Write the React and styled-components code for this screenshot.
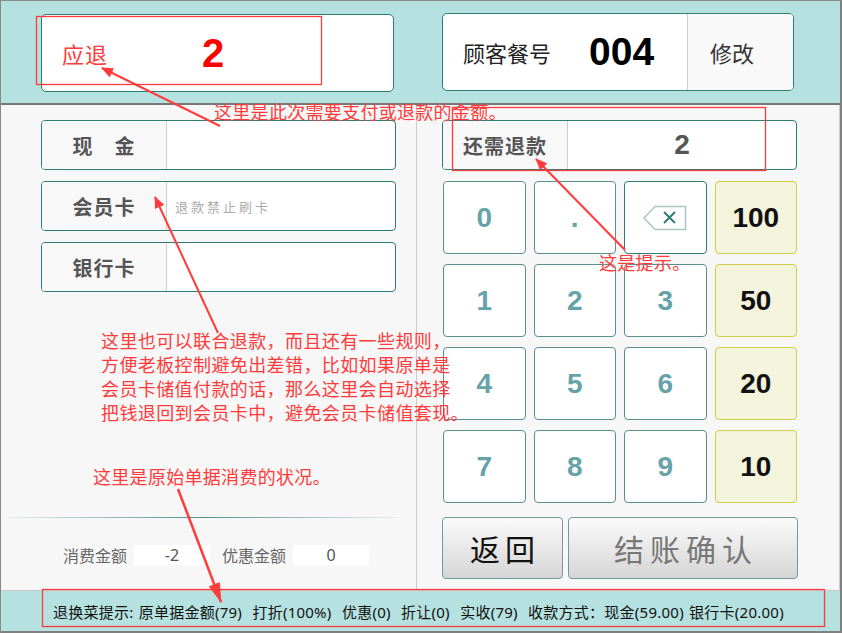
import React from 'react';
import styled, { createGlobalStyle } from 'styled-components';

const teal = '#b5e1e0';
const darkTeal = '#2d7d73';
const noteRed = '#ff3b3b';
const cjk = '"Noto Sans CJK SC", "Noto Sans", sans-serif';
const latin = '"Liberation Sans", Arial, "Noto Sans CJK SC", sans-serif';

const GlobalStyle = createGlobalStyle`
  body {
    margin: 0;
    background: #fff;
    font-family: ${cjk};
  }
  * {
    box-sizing: border-box;
  }
`;

const keys = [
  { label: '0' },
  { label: '.' },
  { label: 'back' },
  { label: '100', amount: true },
  { label: '1' },
  { label: '2' },
  { label: '3' },
  { label: '50', amount: true },
  { label: '4' },
  { label: '5' },
  { label: '6' },
  { label: '20', amount: true },
  { label: '7' },
  { label: '8' },
  { label: '9' },
  { label: '10', amount: true },
];

const payRows = [
  { label: '现　金' },
  { label: '会员卡', hint: '退款禁止刷卡' },
  { label: '银行卡' },
];

function BackspaceIcon() {
  return (
    <svg width="44" height="26" viewBox="0 0 44 26">
      <path d="M1 13 L12 1.5 H42.5 V24.5 H12 Z" fill="#fff" stroke="#a9c6c6" strokeWidth="1.5" />
      <path d="M21 7 L32 18 M32 7 L21 18" stroke={darkTeal} strokeWidth="2" />
    </svg>
  );
}

function Annotations() {
  return (
    <Overlay width="842" height="633" viewBox="0 0 842 633">
      <defs>
        <marker id="head" viewBox="0 0 12 10" refX="11" refY="5" markerWidth="12" markerHeight="10" markerUnits="userSpaceOnUse" orient="auto">
          <path d="M0 0 L12 5 L0 10 Z" fill={noteRed} />
        </marker>
        <marker id="bighead" viewBox="0 0 20 12" refX="19" refY="6" markerWidth="20" markerHeight="12" markerUnits="userSpaceOnUse" orient="auto">
          <path d="M0 0 L20 6 L0 12 Z" fill={noteRed} />
        </marker>
      </defs>
      <g fill="none" stroke={noteRed} strokeWidth="1.3">
        <rect x="36.5" y="16.5" width="285" height="68" />
        <rect x="452.5" y="107.5" width="313" height="63" />
        <rect x="42.5" y="589.5" width="782" height="37" />
      </g>
      <g stroke={noteRed} strokeWidth="2">
        <line x1="220" y1="126" x2="102" y2="68" markerEnd="url(#head)" />
        <line x1="625" y1="250" x2="536" y2="159" markerEnd="url(#head)" />
        <line x1="218" y1="333" x2="155" y2="197" markerEnd="url(#head)" />
        <line x1="178" y1="489" x2="221" y2="602" strokeWidth="2.5" markerEnd="url(#bighead)" />
      </g>
    </Overlay>
  );
}

export default function App() {
  return (
    <Frame>
      <GlobalStyle />
      <Header>
        <DueCard>
          <DueLabel>应退</DueLabel>
          <DueValue>2</DueValue>
        </DueCard>
        <OrderCard>
          <OrderInfo>
            <OrderLabel>顾客餐号</OrderLabel>
            <OrderNo>004</OrderNo>
          </OrderInfo>
          <EditButton>修改</EditButton>
        </OrderCard>
      </Header>

      <Main>
        <LeftPane>
          <PayList>
            {payRows.map(row => (
              <PayRow key={row.label}>
                <FieldLabel>{row.label}</FieldLabel>
                <FieldInput>{row.hint && <Hint>{row.hint}</Hint>}</FieldInput>
              </PayRow>
            ))}
          </PayList>
          <Divider />
          <Totals>
            <TotalLabel>消费金额</TotalLabel>
            <TotalBox>-2</TotalBox>
            <TotalLabel $gap>优惠金额</TotalLabel>
            <TotalBox>0</TotalBox>
          </Totals>
        </LeftPane>

        <RightPane>
          <PayRow>
            <FieldLabel>还需退款</FieldLabel>
            <RemainValue>2</RemainValue>
          </PayRow>
          <Keypad>
            {keys.map(k => (
              <Key key={k.label} $amount={k.amount} $back={k.label === 'back'}>
                {k.label === 'back' ? <BackspaceIcon /> : k.label}
              </Key>
            ))}
          </Keypad>
          <Actions>
            <ActionButton $width={121}>返回</ActionButton>
            <ActionButton $width={230} $muted>结账确认</ActionButton>
          </Actions>
        </RightPane>
      </Main>

      <Footer>
        退换菜提示: 原单据金额(79)  打折(100%)  优惠(0)  折让(0)  实收(79)  收款方式：现金(59.00) 银行卡(20.00)
      </Footer>

      <Annotations />
      <Note style={{ left: 213, top: 100 }}>这里是此次需要支付或退款的金额。</Note>
      <Note style={{ left: 598, top: 251 }}>这是提示。</Note>
      <Note style={{ left: 100, top: 327 }} $multi>
        这里也可以联合退款，而且还有一些规则，
        <br />
        方便老板控制避免出差错，比如如果原单是
        <br />
        会员卡储值付款的话，那么这里会自动选择
        <br />
        把钱退回到会员卡中，避免会员卡储值套现。
      </Note>
      <Note style={{ left: 92, top: 465 }}>这里是原始单据消费的状况。</Note>
    </Frame>
  );
}

const Frame = styled.div`
  position: relative;
  width: 842px;
  height: 633px;
  display: flex;
  flex-direction: column;
  border-top: 1px solid #888;
  border-left: 1px solid #888;
  border-right: 2px solid #808080;
  border-bottom: 2px solid #808080;
  overflow: hidden;
`;

const Header = styled.header`
  height: 104px;
  flex: none;
  display: grid;
  grid-template-columns: 416px 1fr;
  align-items: start;
  background: ${teal};
  border-bottom: 2px solid #777;
`;

const DueCard = styled.div`
  margin: 13px 0 0 40px;
  width: 353px;
  height: 78px;
  display: flex;
  align-items: center;
  padding-left: 20px;
  background: #fff;
  border: 1px solid ${darkTeal};
  border-radius: 5px;
`;

const DueLabel = styled.span`
  font-size: 22px;
  letter-spacing: 1px;
  color: ${noteRed};
`;

const DueValue = styled.span`
  margin-left: 94px;
  font-family: ${latin};
  font-weight: bold;
  font-size: 40px;
  color: #ff0000;
`;

const OrderCard = styled.div`
  margin: 12px 0 0 25px;
  width: 352px;
  height: 78px;
  display: flex;
  background: #fff;
  border: 1px solid ${darkTeal};
  border-radius: 5px;
  overflow: hidden;
`;

const OrderInfo = styled.div`
  flex: 1;
  display: flex;
  align-items: center;
  padding-left: 20px;
`;

const OrderLabel = styled.span`
  font-size: 22px;
  color: #222;
`;

const OrderNo = styled.span`
  margin-left: 38px;
  font-family: ${latin};
  font-weight: bold;
  font-size: 39px;
  color: #000;
`;

const EditButton = styled.div`
  width: 106px;
  display: flex;
  align-items: center;
  padding-left: 22px;
  background: #f9f9f9;
  border-left: 1px solid #ccc;
  font-size: 22px;
  color: #333;
`;

const Main = styled.main`
  height: 485px;
  flex: none;
  display: grid;
  grid-template-columns: 416px 1fr;
  background: #f7f7f7;
`;

const LeftPane = styled.section`
  display: flex;
  flex-direction: column;
  padding-top: 15px;
  padding-bottom: 25px;
  border-right: 1px solid #ccc;
`;

const PayList = styled.div`
  display: flex;
  flex-direction: column;
  gap: 11px;
  padding-left: 40px;
`;

const PayRow = styled.div`
  width: 355px;
  height: 50px;
  flex: none;
  display: flex;
  background: #fff;
  border: 1px solid ${darkTeal};
  border-radius: 4px;
  overflow: hidden;
`;

const FieldLabel = styled.div`
  width: 125px;
  flex: none;
  display: flex;
  align-items: center;
  justify-content: center;
  background: #f8f8f8;
  border-right: 1px solid #ccc;
  font-size: 20px;
  letter-spacing: 1px;
  font-weight: bold;
  color: #555;
`;

const FieldInput = styled.div`
  flex: 1;
  display: flex;
  align-items: center;
  padding-left: 8px;
`;

const Hint = styled.span`
  font-size: 13px;
  letter-spacing: 3px;
  color: #aaa;
`;

const RemainValue = styled.div`
  flex: 1;
  display: flex;
  align-items: center;
  justify-content: center;
  font-family: ${latin};
  font-weight: bold;
  font-size: 28px;
  color: #555;
`;

const Divider = styled.div`
  margin: auto 18px 0 6px;
  height: 1px;
  background: linear-gradient(to right, #e9eded, #4f8d8d 50%, #e9eded);
`;

const Totals = styled.div`
  margin-top: 27px;
  height: 20px;
  display: flex;
  align-items: center;
  padding-left: 62px;
`;

const TotalLabel = styled.span`
  margin-left: ${p => (p.$gap ? '12px' : '0')};
  font-size: 16px;
  color: #666;
`;

const TotalBox = styled.span`
  margin-left: 7px;
  width: 76px;
  height: 20px;
  display: flex;
  align-items: center;
  justify-content: center;
  background: #fff;
  font-family: "Noto Sans", sans-serif;
  font-size: 16px;
  color: #555;
`;

const RightPane = styled.section`
  display: flex;
  flex-direction: column;
  padding: 15px 0 0 25px;
  border-right: 1px solid #ccc;
`;

const Keypad = styled.div`
  margin: 11px 0 0 1px;
  width: 354px;
  display: grid;
  grid-template-columns: repeat(4, 1fr);
  grid-auto-rows: 73px;
  column-gap: 8px;
  row-gap: 10px;
`;

const Key = styled.button`
  display: flex;
  align-items: center;
  justify-content: center;
  padding: 0;
  border-radius: 4px;
  border: 1px solid ${p => (p.$amount ? '#cfcf45' : p.$back ? darkTeal : '#5b8f8f')};
  background: ${p => (p.$amount ? '#f4f4dc' : '#fff')};
  font-family: ${latin};
  font-weight: bold;
  font-size: 28px;
  color: ${p => (p.$amount ? '#111' : '#66a3a9')};
`;

const Actions = styled.div`
  margin-top: 14px;
  display: flex;
  gap: 5px;
`;

const ActionButton = styled.button`
  width: ${p => p.$width}px;
  height: 62px;
  padding: 0 0 0 ${p => (p.$muted ? '6px' : '5px')};
  border: 1px solid #6f9c9c;
  border-radius: 4px;
  background: linear-gradient(#fbfbfb, #d5d5d5);
  font-family: ${cjk};
  font-size: 30px;
  letter-spacing: ${p => (p.$muted ? '6px' : '5px')};
  color: ${p => (p.$muted ? '#777' : '#111')};
`;

const Footer = styled.footer`
  flex: 1;
  display: flex;
  align-items: center;
  padding-left: 52px;
  background: ${teal};
  border-top: 1px solid #c8c8c8;
  font-family: "Noto Sans", "Noto Sans CJK SC", sans-serif;
  font-size: 15px;
  letter-spacing: 0.25px;
  word-spacing: 1px;
  color: #111;
  white-space: pre;
`;

const Overlay = styled.svg`
  position: absolute;
  left: -1px;
  top: -1px;
  pointer-events: none;
`;

const Note = styled.div`
  position: absolute;
  font-size: 18px;
  line-height: ${p => (p.$multi ? '24px' : '20px')};
  letter-spacing: ${p => (p.$multi ? '0.4px' : '0.3px')};
  color: ${noteRed};
  white-space: nowrap;
  pointer-events: none;
`;
